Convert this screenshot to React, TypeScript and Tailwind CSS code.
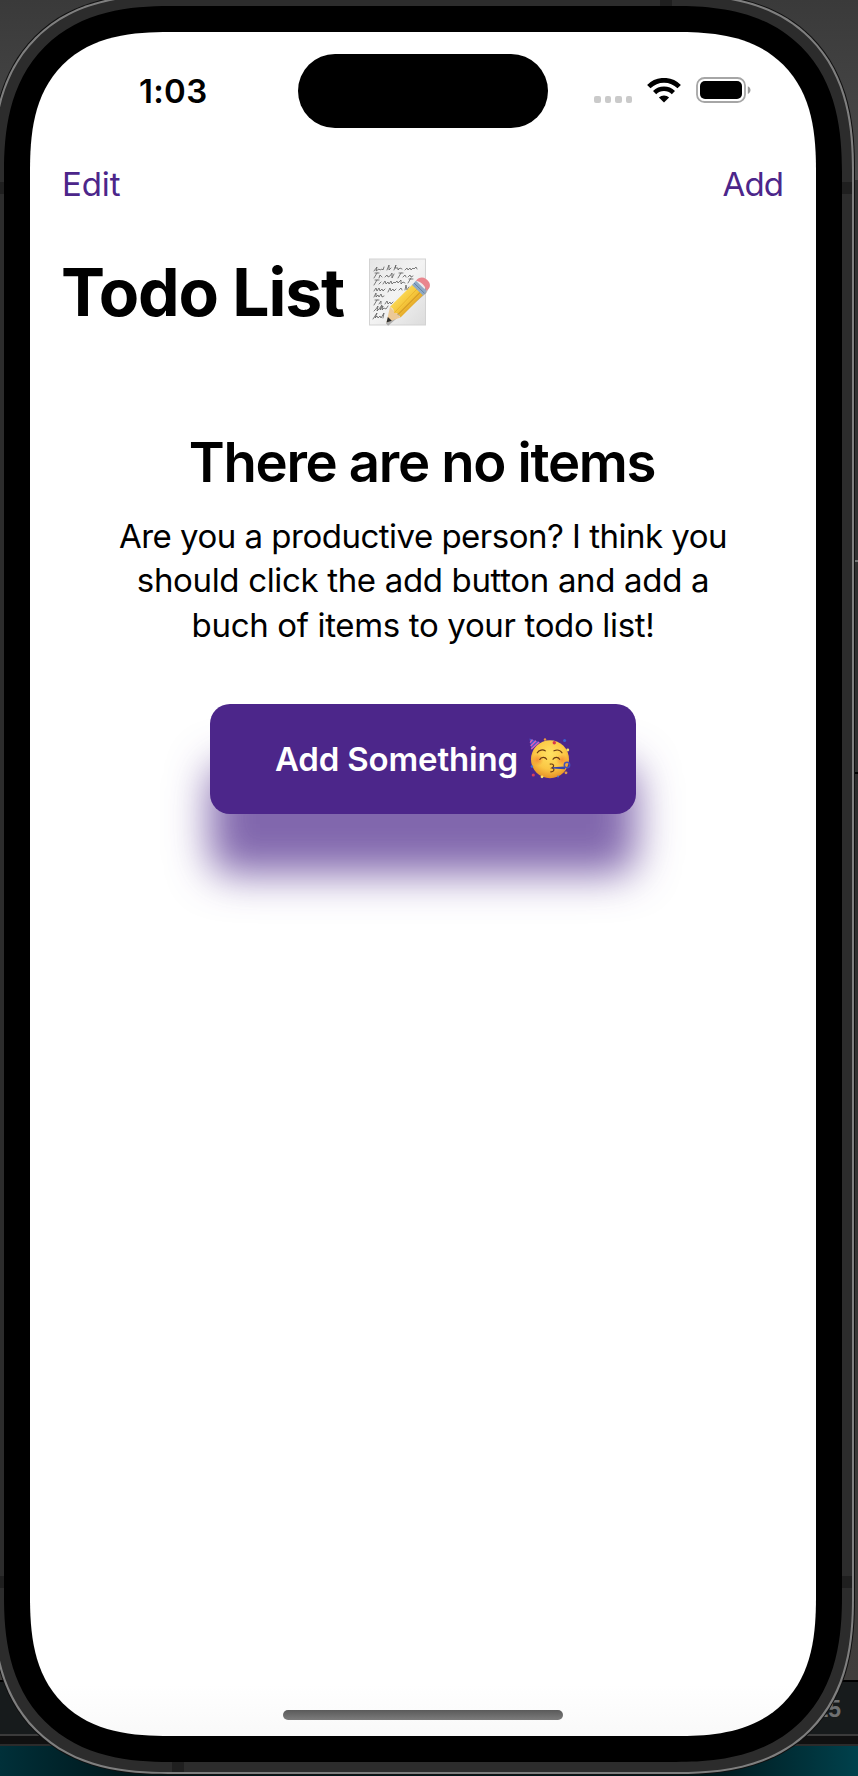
import React from "react";

function WifiIcon() {
  return (
    <svg viewBox="0 0 34 25" className="h-[25px] w-[34px]" fill="none" stroke="#000">
      <path d="M1.8 8.6C10.3 .2 23.7 .2 32.2 8.6" strokeWidth="4.8" />
      <path d="M7.6 14.6C12.9 9.5 21.1 9.5 26.4 14.6" strokeWidth="4.6" />
      <path d="M17 24.6L11.9 19.4C14.6 16.7 19.4 16.7 22.1 19.4Z" fill="#000" stroke="none" />
    </svg>
  );
}

function BatteryIcon() {
  return (
    <svg viewBox="0 0 55 26" className="h-[26px] w-[55px]">
      <rect x="1" y="1" width="48" height="24" rx="7.6" fill="none" stroke="#a6a6a6" strokeWidth="1.8" />
      <rect x="4" y="4" width="42" height="18" rx="5" fill="#000" />
      <path d="M51.8 9.3C55.4 10.7 55.4 15.5 51.8 16.9Z" fill="#999" />
    </svg>
  );
}

function MemoEmoji() {
  return (
    <svg viewBox="0 0 64 72" className="mt-[5px] h-[72px] w-[64px]">
      <defs>
        <linearGradient id="paper" x1="0" y1="0" x2="1" y2="1">
          <stop offset="0" stopColor="#e6e6e6" />
          <stop offset=".5" stopColor="#f3f3f3" />
          <stop offset="1" stopColor="#dcdcdc" />
        </linearGradient>
        <linearGradient id="wood" x1="0" y1="0" x2="1" y2="1">
          <stop offset=".25" stopColor="#fbdc5c" />
          <stop offset=".5" stopColor="#f6c83c" />
          <stop offset=".75" stopColor="#dc9a20" />
        </linearGradient>
      </defs>
      <rect x="1.5" y="2" width="56" height="66" fill="url(#paper)" stroke="#d3d3d3" strokeWidth="1" />
      <g fill="none" stroke="#555" strokeWidth=".75" strokeLinecap="round" strokeLinejoin="round">
        <path d="M6 14l3-4-1 4 3-2 1 1 2-1 1 1 1-3m3 3l2-5 0 5 2-2m3 2l2-5-1 3h3l0 2 2-2 2 1m3 1l2-2 1 2 2-2 1 2 2-2 1 1 2-2 1 2" />
        <path d="M6 21l3-5m-2 0h4m0 5l1-3 2 2m3 0l2-2 1 2 2-1 2-3 0 5 2-4m4 4l3-5m-2 0h4m0 4l2-2 1 2m2 0l2-2 1 2 2-1" />
        <path d="M6 28l3-5m-2 0h4m0 4l2-2m2 2l2-3 1 3 2-2 1 2 2-3 1 3 2-2 1 1 2-2 1 2 3-3 0 4 2-2 2 1m3 0l3-5m-2 1h4" />
        <path d="M6 34l2-3 1 3 2-3 1 3 2-2 1 2 2-2m3 3l2-4 1 3 2-2 1 2 2-2m3 1l2-2 1 2m3 0l1-5 1 5 2-3" />
        <path d="M6 40l2-4 0 4 2-2 1 2 2-3 1 3 2-1" />
        <path d="M6 48l3-5m-2 0h4m0 4l2-3 0 3m4 0l2-3 1 3 2-2 1 2 2-2" />
        <path d="M6 54l2-2 2-3-1 5 2-2 3-4-2 5 3-4-1 4 2-2 2 1 2-3" />
        <path d="M5 62l4-6-2 5 2-2 1 2 2-2 1 2 3-5-1 5" />
      </g>
      <path d="M19 67.5L57 35l3-6" fill="none" stroke="#555" strokeOpacity=".4" strokeWidth="3.5" />
      <path d="M18.5 65.5L22 49.8L32.5 60.5Z" fill="#ecc997" />
      <path d="M18.5 65.5l1.4-5.6 3.9 3.9Z" fill="#2b2b2b" />
      <path d="M22 49.8L44.5 27.5L55 38L32.5 60.5C31.5 57 29 55.5 26.5 56C26 53.2 25 51 22 49.8Z" fill="url(#wood)" />
      <path d="M26.5 55.5L49 32" stroke="#e9b32e" strokeWidth="1" />
      <path d="M30 57.5L52.5 35" stroke="#c98b1e" strokeWidth="1" />
      <path d="M44 28L48 23.8L58.5 34L54.8 38.3Z" fill="#8faac6" />
      <path d="M46 26l10.5 10.3" stroke="#6281a5" strokeWidth="1" />
      <path d="M48 23.8C50.5 20.5 54.5 19.5 58 22C61.8 24.6 63 28.5 61 31.2L58.5 34C57.5 29 53 24.5 48 23.8Z" fill="#e9868e" />
    </svg>
  );
}

function PartyEmoji() {
  return (
    <svg viewBox="0 0 42 42" className="h-[42px] w-[42px]">
      <defs>
        <radialGradient id="face" cx=".5" cy=".35" r=".68">
          <stop offset="0" stopColor="#ffe262" />
          <stop offset=".6" stopColor="#fbc644" />
          <stop offset="1" stopColor="#e58a22" />
        </radialGradient>
        <radialGradient id="blush">
          <stop offset="0" stopColor="#f2762c" stopOpacity=".65" />
          <stop offset="1" stopColor="#f2762c" stopOpacity="0" />
        </radialGradient>
      </defs>
      <circle cx="21" cy="21.3" r="19" fill="url(#face)" />
      <circle cx="8.5" cy="22" r="6" fill="url(#blush)" />
      <circle cx="33" cy="22" r="6" fill="url(#blush)" />
      <path d="M.5 .5L11 4.3L2.4 11.8Z" fill="#4b57cc" />
      <path d="M3.5 1.6L1.1 4.6M7 2.8L1.7 8M10 4L2.3 11" stroke="#df62b2" strokeWidth="1.4" />
      <g fill="none" stroke="#6b3b13" strokeWidth="1.2" strokeLinecap="round">
        <path d="M8.3 14.8C10 11.7 14 11.3 16.2 12.8" />
        <path d="M25 12.8C28 11.5 31.5 12 33 14.8" />
        <path d="M10.8 21.5C12 18.7 16.3 18.7 17.6 21.3" />
        <path d="M24 21.3C25.3 18.7 29.4 18.7 30.6 21.3" />
        <path d="M21.2 26.2C24.2 25.4 26.2 28 22.8 29.9C26.2 30.5 25.3 34 21.8 33.8" />
      </g>
      <path d="M23.5 29.2L36 28.6v2.6L23.5 30.6Z" fill="#3543aa" />
      <circle cx="38" cy="27" r="2.7" fill="none" stroke="#4450bd" strokeWidth="1.5" />
      <circle cx="25.3" cy="4.7" r="1.7" fill="#d8394c" />
      <circle cx="16" cy="1.5" r="1.2" fill="#ef9a3a" />
      <circle cx="35.6" cy="2.4" r="1.5" fill="#385fd0" />
      <circle cx="38.8" cy="12" r="1.4" fill="#f6e36c" />
      <circle cx="4.3" cy="37" r="1.6" fill="#dc3e5a" />
      <circle cx="2.9" cy="28.5" r="1.2" fill="#3d6fd6" />
      <circle cx="13" cy="38.8" r="1.4" fill="#f9e46a" />
      <circle cx="37" cy="34.8" r="1.4" fill="#e79a48" />
      <circle cx="29" cy="38.6" r="1" fill="#4d74cc" />
    </svg>
  );
}

function StatusBar() {
  return (
    <div className="grid h-[118px] shrink-0 grid-cols-[268px_250px_1fr] pt-[22px]">
      <div className="pt-[17px] pl-[109px] text-[33px] leading-[40px] font-semibold tracking-[0.3px]">1:03</div>
      <div className="h-[74px] rounded-full bg-black" />
      <div className="mt-[23px] flex h-[26px] items-start pl-[46px]">
        <div className="mt-[19px] flex gap-[4px]">
          <span className="size-[6.6px] rounded-[2px] bg-[#cacaca]" />
          <span className="size-[6.6px] rounded-[2px] bg-[#cacaca]" />
          <span className="size-[6.6px] rounded-[2px] bg-[#cacaca]" />
          <span className="size-[6.6px] rounded-[2px] bg-[#cacaca]" />
        </div>
        <div className="mt-px ml-[15px]"><WifiIcon /></div>
        <div className="ml-[15px]"><BatteryIcon /></div>
      </div>
    </div>
  );
}

function Screen() {
  return (
    <main className="flex h-[1704px] w-[786px] flex-col overflow-hidden rounded-[140px] bg-white bg-[linear-gradient(to_bottom,#fff_97%,#f9f9f9_100%)] [corner-shape:superellipse(1.38)]">
      <StatusBar />
      <nav className="mt-[12px] flex shrink-0 justify-between pr-[33px] pl-[32px] text-[33px] leading-[44px] text-[#4c268a]">
        <button className="tracking-[-0.1px]">Edit</button>
        <button className="tracking-[-0.9px]">Add</button>
      </nav>
      <h1 className="mt-[46px] flex h-[80px] shrink-0 items-start pl-[31px] text-[66px] leading-[80px] font-bold tracking-[-1.15px]">
        <span className="w-[307px] whitespace-nowrap">Todo List</span>
        <MemoEmoji />
      </h1>
      <section className="mt-[97px] flex flex-col items-center">
        <h2 className="pr-[2px] text-[54.5px] leading-[66px] font-semibold tracking-[-1.32px] whitespace-nowrap">There are no items</h2>
        <p className="mt-[19px] text-center text-[33px] leading-[44.33px] whitespace-nowrap">
          <span className="tracking-[-0.51px]">Are you a productive person? I think you</span>
          <br />
          <span className="tracking-[-0.34px]">should click the add button and add a</span>
          <br />
          <span className="tracking-[-0.34px]">buch of items to your todo list!</span>
        </p>
        <button className="mt-[57px] flex h-[110px] w-[426px] items-center justify-center gap-[11px] rounded-[20px] bg-[#4c268a] text-[33px] font-semibold tracking-[-0.15px] text-white shadow-[0_60px_42px_rgba(76,38,138,0.7)]">
          <span className="pt-[2px] whitespace-nowrap">Add Something</span>
          <PartyEmoji />
        </button>
      </section>
      <div className="mt-auto mb-[16px] h-[10px] w-[280px] shrink-0 self-center rounded-full bg-linear-to-b from-[#5a5a5a] to-[#7c7c7c]" />
    </main>
  );
}

function Backdrop() {
  return (
    <div className="flex h-[1776px] w-[858px] flex-col bg-[#3a3a3a]">
      <div className="h-[180px] bg-linear-to-b from-[#3a3a3a] to-[#4b4b4b]" />
      <div className="h-[380px] bg-[#323232]" />
      <div className="h-[2px] bg-[#777]" />
      <div className="h-[210px] bg-[#303030]" />
      <div className="h-[2px] bg-black" />
      <div className="flex-1 bg-linear-to-b from-[#2c2c2c] to-[#403e3c]" />
      <div className="h-[2px] bg-black" />
      <div className="flex h-[52px] justify-end bg-[#171b1c] pt-[15px] pr-[17px] font-['Liberation_Sans',sans-serif] text-[23px] leading-[24px] font-bold text-[#6e7071]">15</div>
      <div className="h-[2px] bg-[#3b3b3b]" />
      <div className="h-[8px] bg-[#101010]" />
      <div className="h-[2px] bg-[#2b2b2b]" />
      <div className="h-[30px] bg-[linear-gradient(to_right,#003039,#00161a_15%,#00161a_82%,#00414c)]" />
    </div>
  );
}

export default function App() {
  return (
    <div className="relative h-[1776px] w-[858px] overflow-hidden font-['Inter',sans-serif] text-black">
      <Backdrop />
      <div className="absolute top-[-7px] left-[-9px] h-[1782px] w-[864px] rounded-[177px] bg-[#111] p-px [corner-shape:superellipse(1.3)]">
        <div className="h-full w-full rounded-[176px] bg-[#7f7f7f] p-[2px] [corner-shape:superellipse(1.3)]">
          <div className="relative h-full w-full overflow-hidden rounded-[174px] bg-[#2c2c2c] p-[10px] [corner-shape:superellipse(1.3)]">
            <span className="absolute top-[186px] left-0 h-[12px] w-full bg-[#1f1f1f]" />
            <span className="absolute bottom-[184px] left-0 h-[12px] w-full bg-[#1f1f1f]" />
            <span className="absolute top-0 right-[180px] h-[10px] w-[12px] bg-[#1f1f1f]" />
            <span className="absolute bottom-0 left-[178px] h-[10px] w-[12px] bg-[#1f1f1f]" />
            <div className="relative h-full w-full rounded-[166px] bg-black p-[26px] [corner-shape:superellipse(1.3)]">
              <Screen />
            </div>
          </div>
        </div>
      </div>
    </div>
  );
}
